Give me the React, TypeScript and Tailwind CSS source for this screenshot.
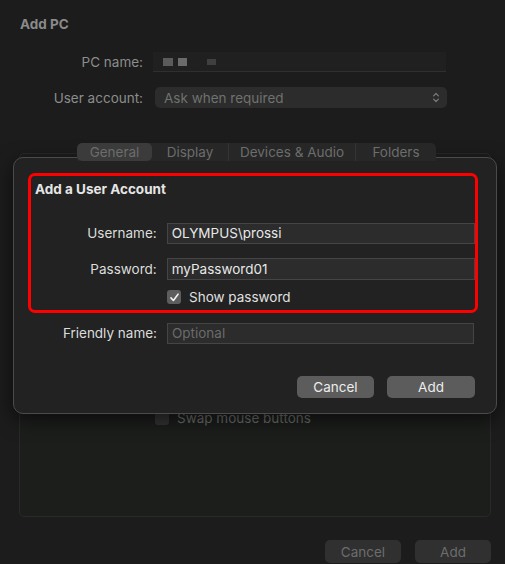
import React from 'react';

const Check: React.FC = () => (
  <svg viewBox="0 0 14 14" className="w-[11px] h-[11px]" fill="none">
    <path d="M2.5 7.5 L5.6 10.8 L11.5 2.8" stroke="#f2f2f2" strokeWidth="2" strokeLinecap="round" strokeLinejoin="round" />
  </svg>
);

const Chevrons: React.FC = () => (
  <svg viewBox="0 0 10 16" className="w-[8px] h-[13px]" fill="none">
    <path d="M2 6 L5 3 L8 6 M2 10 L5 13 L8 10" stroke="#7a7b7a" strokeWidth="1.5" strokeLinecap="round" strokeLinejoin="round" />
  </svg>
);

const tabs = ['General', 'Display', 'Devices & Audio', 'Folders'];
const tabWidths = ['w-[75px]', 'w-[76px]', 'w-[128px]', 'w-[80px]'];

const DialogRow: React.FC<{ label: string; children: React.ReactNode; labelW: string }> = ({ label, children, labelW }) => (
  <div className="flex items-center gap-[10px]">
    <div className={`${labelW} text-right text-[13.5px] text-[#dcdcdc]`}>{label}</div>
    {children}
  </div>
);

const App: React.FC = () => {
  return (
    <div className="relative w-[505px] h-[564px] overflow-hidden bg-[#1b1c1b] font-['Inter','Liberation_Sans',sans-serif] select-none">
      {/* window behind the sheet */}
      <div className="flex flex-col pt-[16px]">
        <div className="pl-[20px] h-[16px] leading-[16px] text-[13.5px] font-bold text-[#8a8a8a]">Add PC</div>

        <div className="mt-[20px] flex items-center gap-[10px]">
          <div className="w-[143px] text-right text-[13.5px] text-[#8c8c8c]">PC name:</div>
          <div className="flex items-center gap-[5px] w-[293px] h-[20px] bg-[#1f201f] border-b border-[#2e2f2e] pl-[10px]">
            <span className="w-[10px] h-[8px] bg-[#5a5b5a] blur-[0.5px]" />
            <span className="w-[9px] h-[8px] bg-[#6a6b6a] blur-[0.5px]" />
            <span className="ml-[15px] w-[9px] h-[6px] bg-[#3e3f3e] blur-[0.5px]" />
          </div>
        </div>

        <div className="mt-[15px] flex items-center gap-[12px]">
          <div className="w-[143px] text-right text-[13.5px] text-[#8c8c8c]">User account:</div>
          <div className="flex items-center justify-between w-[292px] h-[21px] rounded-[5px] bg-[#2b2c2b] pl-[9px] pr-[7px]">
            <span className="text-[13.5px] text-[#707170]">Ask when required</span>
            <Chevrons />
          </div>
        </div>

        <div className="mt-[35px] pl-[77px] relative z-10 flex">
          <div className="flex h-[18px] rounded-t-[5px] bg-[#262726] overflow-hidden">
            {tabs.map((t, i) => (
              <div
                key={t}
                className={`${tabWidths[i]} flex items-center justify-center text-[13.5px] text-[#6c6d6c] ${
                  i === 0 ? 'bg-[#3a3b3a] rounded-[5px]' : ''
                } ${i === 2 ? 'border-l border-r border-[#333433]' : ''}`}
              >
                {t}
              </div>
            ))}
          </div>
        </div>

        <div className="-mt-[8px] ml-[19px] mr-[14px] h-[364px] rounded-[5px] border border-[#282928] bg-[#1c1e1c] pt-[254px] pl-[135px]">
          <div className="flex items-center gap-[8px]">
            <span className="w-[14px] h-[14px] rounded-[3px] bg-[#333433]" />
            <span className="text-[13.5px] text-[#6e6f6e]">Swap mouse buttons</span>
          </div>
        </div>

        <div className="mt-[23px] pr-[14px] flex justify-end gap-[14px]">
          <button className="w-[76px] h-[23px] rounded-[5px] bg-[#2f302f] text-[13.5px] text-[#6c6d6c]">Cancel</button>
          <button className="w-[76px] h-[23px] rounded-[5px] bg-[#2f302f] text-[13.5px] text-[#6c6d6c]">Add</button>
        </div>
      </div>

      {/* sheet */}
      <div className="absolute left-[13px] top-[157px] w-[484px] h-[257px] rounded-[10px] border border-[#4a4b4a] bg-[#212221] shadow-[0_6px_20px_rgba(0,0,0,0.6)] pl-[14px] pt-[15px]">
        <div className="w-[450px] h-[140px] rounded-[7px] border-[3px] border-[#ff0000] pl-[4px] pt-[5px]">
          <div className="h-[16px] leading-[16px] text-[13.5px] font-bold text-[#e6e6e6]">Add a User Account</div>
          <div className="-ml-[4px] mt-[26px] flex flex-col">
            <DialogRow label="Username:" labelW="w-[126px]">
              <div className="w-[309px] h-[21px] bg-[#2b2c2b] border border-[#444544] flex items-center pl-[4px] text-[13.5px] text-[#e8e8e8]">
                OLYMPUS\prossi
              </div>
            </DialogRow>
            <div className="mt-[14px]">
              <DialogRow label="Password:" labelW="w-[126px]">
                <div className="w-[309px] h-[22px] bg-[#2b2c2b] border border-[#444544] flex items-center pl-[4px] text-[13.5px] text-[#e8e8e8]">
                  myPassword01
                </div>
              </DialogRow>
            </div>
            <div className="mt-[7px] pl-[136px] flex items-center gap-[8px]">
              <span className="w-[14px] h-[14px] rounded-[3px] bg-[#5c5d5c] flex items-center justify-center">
                <Check />
              </span>
              <span className="text-[13.5px] text-[#e0e0e0]">Show password</span>
            </div>
          </div>
        </div>

        <div className="mt-[10px]">
          <DialogRow label="Friendly name:" labelW="w-[129px]">
            <div className="w-[307px] h-[21px] bg-[#2b2c2b] border border-[#444544] flex items-center pl-[4px] text-[13.5px] text-[#6a6b6a]">
              Optional
            </div>
          </DialogRow>
        </div>

        <div className="mt-[32px] pr-[21px] flex justify-end gap-[13px]">
          <button className="w-[77px] h-[22px] rounded-[5px] bg-[#5b5c5b] text-[13.5px] text-[#ececec]">Cancel</button>
          <button className="w-[88px] h-[22px] rounded-[5px] bg-[#5b5c5b] text-[13.5px] text-[#ececec]">Add</button>
        </div>
      </div>
    </div>
  );
};

export default App;
